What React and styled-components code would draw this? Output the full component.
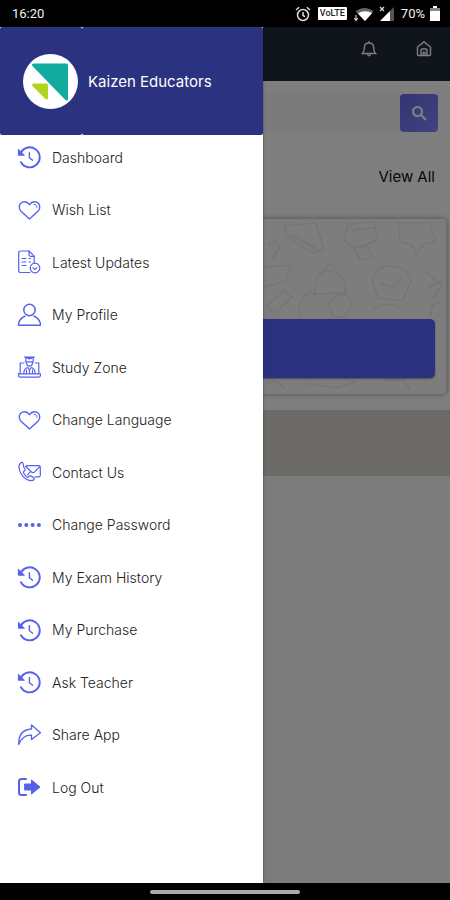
import styled, { createGlobalStyle } from "styled-components";

const GlobalStyle = createGlobalStyle`
    * {
        box-sizing: border-box;
    }

    body {
        margin: 0;
        background: #000;
        font-family: Inter, "Liberation Sans", sans-serif;
    }

    ul {
        list-style: none;
        margin: 0;
        padding: 0;
    }

    svg {
        display: block;
    }
`;

const Screen = styled.div`
    display: flex;
    flex-direction: column;
    min-height: 100vh;
`;

const StatusBar = styled.div`
    display: flex;
    align-items: center;
    justify-content: space-between;
    height: 27px;
    padding: 0 10px 0 12px;
    background: #000;
    color: #f2f2f2;
    font-family: Roboto, sans-serif;
    font-size: 13px;
`;

const StatusIcons = styled.div`
    display: flex;
    align-items: center;
    gap: 5px;
`;

const Volte = styled.span`
    margin: 0 2px;
    padding: 0 2px;
    border-radius: 1px;
    background: #fff;
    color: #222;
    font-size: 9px;
    font-weight: 500;
    line-height: 13px;
`;

const Body = styled.div`
    position: relative;
    flex: 1;
    display: flex;
`;

const Page = styled.main`
    flex: 1;
    background: #f8f8f8;
`;

const TopBar = styled.header`
    display: flex;
    justify-content: flex-end;
    gap: 35px;
    height: 54px;
    padding: 12px 16px;
    background: #212a39;
`;

const IconButton = styled.button`
    width: 20px;
    height: 20px;
    padding: 0;
    border: 0;
    background: none;
    color: #fff;
`;

const SearchForm = styled.form`
    display: flex;
    align-items: center;
    padding: 12px 12px 8px 12px;
    background: #fdfdfd;
`;

const SearchInput = styled.input`
    flex: 1;
    min-width: 0;
    height: 40px;
    border: 0;
    background: #f6f6f6;
`;

const SearchButton = styled.button`
    display: flex;
    align-items: center;
    justify-content: center;
    width: 38px;
    height: 38px;
    padding: 0;
    border: 0;
    border-radius: 4px;
    background: linear-gradient(135deg, #6868e8, #8288ff);
    color: #fff;
`;

const SectionHead = styled.div`
    display: flex;
    justify-content: flex-end;
    padding: 25px 15px 31px;
    background: #fdfdfd;
`;

const ViewAll = styled.a`
    color: #111;
    font-size: 15px;
    line-height: 22px;
    text-decoration: none;
`;

const CardArea = styled.div`
    padding: 0 4px 16px;
    background: #fdfdfd;
`;

const Card = styled.section`
    position: relative;
    height: 175px;
    padding: 100px 11px 16px;
    border-radius: 4px;
    background: #fbfbfb;
    box-shadow: 0 0 5px 1px rgba(0, 0, 0, 0.3);
`;

const Doodles = styled.svg`
    position: absolute;
    top: 0;
    right: 0;
    color: #eaeaea;
`;

const Banner = styled.div`
    position: relative;
    height: 59px;
    border-radius: 5px;
    background: #5662fe;
    box-shadow: 0 1px 2px rgba(0, 0, 0, 0.4);
`;

const Strip = styled.div`
    height: 66px;
    background: #d6d4cd;
`;

const Scrim = styled.div`
    position: absolute;
    inset: 0;
    background: rgba(0, 0, 0, 0.5);
`;

const Drawer = styled.aside`
    position: absolute;
    inset: 0 auto 0 0;
    display: flex;
    flex-direction: column;
    width: 263px;
    max-width: 85%;
    background: #fff;
    box-shadow: 0 0 2px rgba(0, 0, 0, 0.5);
`;

const DrawerHeader = styled.div`
    display: flex;
    height: 108px;
`;

const LogoBox = styled.div`
    display: flex;
    align-items: center;
    justify-content: flex-end;
    width: 82px;
    padding-right: 4px;
    border-radius: 2px;
    background: #2b327f;
`;

const TitleBox = styled.div`
    flex: 1;
    display: flex;
    align-items: center;
    padding-left: 6px;
    border-radius: 2px;
    background: #2b327f;
    color: #fff;
    font-size: 15px;
    white-space: nowrap;
`;

const Menu = styled.nav`
    flex: 1;
    display: flex;
    padding: 10px 0 84px;
`;

const MenuList = styled.ul`
    flex: 1;
    display: flex;
    flex-direction: column;
    justify-content: space-between;
`;

const MenuLink = styled.a`
    display: flex;
    align-items: center;
    gap: 11px;
    height: 24px;
    padding-left: 17px;
    color: #222;
    font-size: 14px;
    font-weight: 300;
    text-decoration: none;

    svg {
        color: #5560ee;
    }
`;

const NavBar = styled.div`
    display: flex;
    align-items: center;
    justify-content: center;
    height: 17px;
    background: #000;
`;

const NavHandle = styled.div`
    width: 150px;
    height: 4px;
    border-radius: 2px;
    background: #aaa;
`;

const Line = ({ children, width = 1.2 }) => (
    <svg width="24" height="24" viewBox="0 0 24 24" fill="none" stroke="currentColor"
        strokeWidth={width} strokeLinecap="round" strokeLinejoin="round" aria-hidden="true">
        {children}
    </svg>
);

const HistoryIcon = () => (
    <Line width={1.9}>
        <path d="M3.500 8.500A10 10 0 1 1 4 17.200" />
        <path d="M1.400 4.600v5.600h5.600z" fill="currentColor" strokeWidth="1" />
        <path d="M12.400 7.800v5l3.200 2.400" strokeWidth="1.400" />
    </Line>
);

const HeartIcon = () => (
    <Line width={1.4}>
        <path d="M12.500 21L4 13.200C1.200 10.400 1.800 5.600 5.400 4.200c2.700-1 5.400.1 7.100 2.500 1.700-2.400 4.400-3.500 7.100-2.500 3.600 1.400 4.200 6.200 1.400 9z" />
        <path d="M17.200 6.400c1.800 0 2.800 1.300 2.700 3" strokeWidth="1" />
    </Line>
);

const UpdatesIcon = () => (
    <Line>
        <path d="M13 22.500H3.500A1.800 1.800 0 0 1 1.700 20.700V2.800A1.800 1.800 0 0 1 3.500 1H12l5.200 5.200v7" />
        <path d="M12 1.200v3.600a1.500 1.500 0 0 0 1.500 1.500h3.500" />
        <path d="M5 8.500h4M5 12h4M5 15.500h4M12 8.500h1.500M12 12h1.500" />
        <circle cx="18" cy="18" r="4.800" />
        <path d="M16 17.600l2 2 2-2" />
    </Line>
);

const ProfileIcon = () => (
    <Line width={1.5}>
        <circle cx="12.500" cy="7" r="5.700" />
        <path d="M8 13.200c-3.800 1.500-6.300 4.600-6.600 9h22.200c-.3-4.400-2.800-7.500-6.600-9" />
    </Line>
);

const StudyIcon = () => (
    <Line>
        <path d="M7.500 2h10l-5 2z" fill="currentColor" />
        <path d="M8.800 3.500v3.400h7.400V3.500" />
        <path d="M9.500 7.500c0 4.800 6 4.800 6 0" />
        <path d="M7 8H3.200v10.500M18 8h3.800v10.500M1.500 18.800h22v1.400a2 2 0 0 1-2 2h-18a2 2 0 0 1-2-2z" />
        <path d="M6.800 18.500c0-4 2-5.500 4-6l1.700 2.500 1.700-2.500c2 .5 4 2 4 6M9.500 15v3.500M15.500 15v3.500M12.500 15v3.500" />
    </Line>
);

const ContactIcon = () => (
    <Line>
        <path d="M6.800 7.400L6 3.400C5.700 2.200 4.400 2 3.500 3c-2 2.200-1.700 6.400.3 10.200 2.500 4.600 7 7.800 10.500 7.500 1.700-.2 3-1.300 3-2.200 0-.8-3.500-2.700-4.400-2.600-1 .1-1.300 1.400-2.200 1.400-1.300 0-4.400-4-4.300-5.200.1-1 1.700-1.300 1.700-2.200 0-.9-.6-1.800-1.300-2.500z" />
        <path d="M8.500 6.500C9 5.800 9.500 5.700 10.300 5.700h11.400c1 0 1.600.6 1.600 1.500v8c0 1-.6 1.700-1.600 1.700h-3.500M9 6.800l5.200 5c1.200 1.200 2.300 1.200 3.500 0l5.200-5.500M10.500 14.800l2.500-2.600" />
    </Line>
);

const DotsIcon = () => (
    <svg width="24" height="24" viewBox="0 0 24 24" fill="currentColor" aria-hidden="true">
        <circle cx="3" cy="12" r="2" />
        <circle cx="9.300" cy="12" r="2" />
        <circle cx="15.600" cy="12" r="2" />
        <circle cx="21.900" cy="12" r="2" />
    </svg>
);

const ShareIcon = () => (
    <Line width={1.3}>
        <path d="M14.500 2L23.500 9.700 14.500 16.500v-4.300C8.500 12 4.500 14.500 1.700 21.500 1.500 12 5.500 6.500 14.500 6z" />
    </Line>
);

const LogoutIcon = () => (
    <Line width={2}>
        <path d="M9 4H4.500A2.500 2.500 0 0 0 2 6.500v11A2.500 2.500 0 0 0 4.500 20H9" />
        <path d="M8 9h6.500V5l8.500 7-8.500 7v-4H8z" fill="currentColor" strokeWidth="1" />
    </Line>
);

const menuItems = [
    { label: "Dashboard", icon: HistoryIcon },
    { label: "Wish List", icon: HeartIcon },
    { label: "Latest Updates", icon: UpdatesIcon },
    { label: "My Profile", icon: ProfileIcon },
    { label: "Study Zone", icon: StudyIcon },
    { label: "Change Language", icon: HeartIcon },
    { label: "Contact Us", icon: ContactIcon },
    { label: "Change Password", icon: DotsIcon },
    { label: "My Exam History", icon: HistoryIcon },
    { label: "My Purchase", icon: HistoryIcon },
    { label: "Ask Teacher", icon: HistoryIcon },
    { label: "Share App", icon: ShareIcon },
    { label: "Log Out", icon: LogoutIcon },
];

const Logo = () => (
    <svg width="55" height="55" viewBox="0 0 55 55" role="img" aria-label="Kaizen Educators logo">
        <circle cx="27.500" cy="27.500" r="27.500" fill="#fff" />
        <path d="M10.500 11h33v34z" fill="#12ab9d" stroke="#12ab9d" strokeWidth="3" strokeLinejoin="round" />
        <path d="M10.500 31h13v13z" fill="#b0d61c" stroke="#b0d61c" strokeWidth="3" strokeLinejoin="round" />
    </svg>
);

const StatusRow = () => (
    <StatusBar>
        <span>16:20</span>
        <StatusIcons>
            <svg width="16" height="16" viewBox="0 0 16 16" fill="none" stroke="#ddd" strokeWidth="1.500">
                <circle cx="8" cy="9" r="5.500" />
                <path d="M8 6v3.500l2 1.200M1 4l3.200-2.700M15 4l-3.200-2.700" />
            </svg>
            <Volte>VoLTE</Volte>
            <svg width="20" height="16" viewBox="0 0 20 16">
                <path d="M1.500 5.500C6.500.8 14.500.8 19.500 5.500L11 15z" fill="#666" />
                <path d="M4 7.500C8 4.500 14 4.500 18 7.200L11 15z" fill="#fff" />
                <path d="M2 9v5M.2 12L2 14.500 4 12" fill="none" stroke="#ccc" strokeWidth="1.200" />
            </svg>
            <svg width="17" height="16" viewBox="0 0 17 16">
                <path d="M1 15L11 5v10z" fill="#fff" />
                <path d="M11 5l4-4v14h-4z" fill="#555" />
                <path d="M1 1l4 4M5 1L1 5" stroke="#ddd" strokeWidth="1.200" />
            </svg>
            <span>70%</span>
            <svg width="10" height="15" viewBox="0 0 10 15">
                <path d="M3 0h4v2h3v13H0V2h3z" fill="#fff" />
                <path d="M0 2h10v3H0z" fill="#888" />
            </svg>
        </StatusIcons>
    </StatusBar>
);

const CardDoodles = () => (
    <Doodles width="184" height="175" viewBox="0 0 184 175" fill="none" stroke="currentColor" strokeWidth="1.500" aria-hidden="true">
        <path d="M22 7l32-3 8 26-12 4-26-18zM30 16l25 14M6 26q8-8 12 2l-8 12" />
        <path d="M86 5l26-2 4 18-24 8-10-8zM90 12l24-4M92 29l14-2 4 12-12 2z" />
        <path d="M136 4h32l5 18-12 4-7 10-4-10-12-3zM146 13h2M153 13h2M160 13h2" strokeLinecap="round" />
        <path d="M2 48l27-2-6 16-20 6M53 72q0-22 16-20t14 22l-32 1zM62 51l6-7 6 7" />
        <path d="M110 62q3-16 20-15t19 15l-8 20-25-3zM118 64l12 4 10-10M160 50l20 16-10 14M165 70l15-9" />
        <path d="M4 88l18-16 8 6-17 16zM38 98q-4-18 12-26M66 84q18-18 24 1l-7 13h-12zM109 92q16-12 30-2M168 98l3-12 9-4" />
        <path d="M40 164l35 5 20-7M122 161h20l6 10M2 166q14-9 20 4" />
    </Doodles>
);

const App = () => (
    <Screen>
        <GlobalStyle />
        <StatusRow />
        <Body>
            <Page>
                <TopBar>
                    <IconButton aria-label="Notifications">
                        <svg width="20" height="20" viewBox="0 0 20 20" fill="none" stroke="currentColor" strokeWidth="1.400">
                            <path d="M3.500 14.500h13c-1.500-1.500-1.800-2.800-1.800-5.500 0-3-1.800-5-4.700-5S5.300 6 5.300 9c0 2.700-.3 4-1.800 5.500zM10 4V2M8.500 15.500q1.500 2.500 3 0" />
                        </svg>
                    </IconButton>
                    <IconButton as="a" href="#home" aria-label="Home">
                        <svg width="20" height="20" viewBox="0 0 20 20" fill="none" stroke="currentColor" strokeWidth="1.400">
                            <path d="M3.500 8L10 3l6.500 5v7.500q0 1-1 1h-11q-1 0-1-1z" />
                            <path d="M7 16.500V11q0-1 1-1h4q1 0 1 1v5.500M9.200 16.500v-4M11 16.500v-4" />
                        </svg>
                    </IconButton>
                </TopBar>
                <SearchForm>
                    <SearchInput type="search" aria-label="Search" />
                    <SearchButton type="button" aria-label="Search">
                        <svg width="16" height="16" viewBox="0 0 16 16" fill="none" stroke="currentColor" strokeWidth="2.200">
                            <circle cx="6.500" cy="6.500" r="4.500" />
                            <path d="M10 10l5 5" />
                        </svg>
                    </SearchButton>
                </SearchForm>
                <SectionHead>
                    <ViewAll href="#all">View All</ViewAll>
                </SectionHead>
                <CardArea>
                    <Card>
                        <CardDoodles />
                        <Banner />
                    </Card>
                </CardArea>
                <Strip />
            </Page>
            <Scrim />
            <Drawer>
                <DrawerHeader>
                    <LogoBox>
                        <Logo />
                    </LogoBox>
                    <TitleBox>Kaizen Educators</TitleBox>
                </DrawerHeader>
                <Menu>
                    <MenuList>
                        {menuItems.map(({ label, icon: Icon }) => (
                            <li key={label}>
                                <MenuLink href="#menu">
                                    <Icon />
                                    {label}
                                </MenuLink>
                            </li>
                        ))}
                    </MenuList>
                </Menu>
            </Drawer>
        </Body>
        <NavBar>
            <NavHandle />
        </NavBar>
    </Screen>
);

export default App;
